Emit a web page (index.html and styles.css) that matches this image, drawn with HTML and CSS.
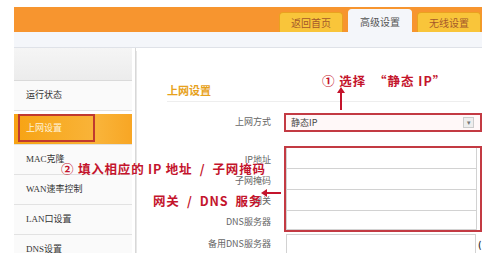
FILE: index.html
```html
<html>
<head>
<title>上网设置</title>
<link rel="stylesheet" href="styles.css">
</head>
<body>

<div class="page">
	<div class="topbar">
		<div class="tab">返回首页</div>
		<div class="tab active">高级设置</div>
		<div class="tab">无线设置</div>
	</div>
	<div class="band"></div>

	<div class="main">
		<div class="sidebar">
			<div class="side_top"></div>
			<div class="side_item">运行状态</div>
			<div class="side_item current"><span class="mark">上网设置</span></div>
			<div class="side_item">MAC克隆</div>
			<div class="side_item">WAN速率控制</div>
			<div class="side_item">LAN口设置</div>
			<div class="side_item">DNS设置</div>
		</div>

		<div class="content">
			<div class="heading">上网设置</div>

			<div class="row">
				<label class="lbl">上网方式</label>
				<div class="select">静态IP<span class="arrow">&#9662;</span></div>
			</div>

			<div class="group">
				<div class="lbls">
					<label class="lbl">IP地址</label>
					<label class="lbl">子网掩码</label>
					<label class="lbl">网关</label>
					<label class="lbl">DNS服务器</label>
				</div>
				<div class="boxes">
					<div class="input"></div>
					<div class="input"></div>
					<div class="input"></div>
					<div class="input last"></div>
				</div>
			</div>

			<div class="row last_row">
				<label class="lbl">备用DNS服务器</label>
				<div class="input single"></div>
				<span class="paren">(</span>
			</div>
		</div>
	</div>

	<!-- annotations drawn over the screenshot -->
	<div class="note note1">&#9312; 选择 &nbsp;“静态 IP”</div>
	<div class="arrow_up"></div>
	<div class="note note2">&#9313; 填入相应的 IP 地址 &nbsp;/ &nbsp;子网掩码</div>
	<div class="note note3">网关 &nbsp;/ &nbsp;DNS &nbsp;服务</div>
	<div class="arrow_left"></div>
</div>

</body>
</html>
```

FILE: styles.css
```css
body { margin: 0; background-color: white; font-family: "Noto Sans CJK SC", "Liberation Sans", sans-serif; }
.page { position: relative; width: 468px; padding: 7px 0 0 14px; }

.topbar {
	height: 25px; background-color: #f7952f;
	display: flex; justify-content: flex-end; align-items: flex-end;
	padding-right: 1px;
}
.tab {
	width: 64px; height: 20px; margin-left: 5px;
	background-color: #f9c53a; border: 1px solid #eaa21f; border-bottom: none;
	border-radius: 4px 4px 0 0; box-sizing: border-box;
	font-size: 10px; line-height: 20px; text-align: center; color: #a5582a;
}
.tab.active { height: 23px; background-color: #f4f6fa; border-color: #f4f6fa; color: #555; line-height: 24px; }
.band { height: 15px; background-color: #f4f6fa; border-bottom: 1px solid #dfe2e8; }

.main { display: flex; }
.sidebar { width: 118px; border-right: 1px solid #d8d8d8; padding-right: 3px; box-shadow: 4px 0 0 -3px #e8e8e8; }
.side_top { height: 32px; background: linear-gradient(#f5f5f5, #ececec); border-bottom: 1px solid #dadada; }
.side_item {
	height: 29px; border-bottom: 1px solid #e2e2e2; background-color: #fafafa;
	font-size: 9px; line-height: 29px; padding-left: 12px; color: #333;
	font-family: "Liberation Serif", "Noto Sans CJK SC", serif;
}
.side_item:first-of-type { height: 24px; }
.side_item.current {
	height: 30px; padding-left: 4px;
	background: linear-gradient(90deg, #f7a313, #f9b43a 70%, #f8a624);
	color: #fff3d8; line-height: normal;
}
.mark { display: block; width: 67px; height: 24px; margin-top: 3px; padding-left: 6px; border: 2px solid #c0392f; line-height: 24px; }

.content { flex: 1; margin-left: 4px; background-color: white; padding-top: 34px; }
.heading {
	margin-left: 27px; margin-right: 12px; padding-bottom: 3px;
	border-bottom: 1px solid #eeeeee;
	font-size: 11px; font-weight: bold; color: #e7a21d;
}

.row { display: flex; align-items: center; margin-top: 10px; }
.lbl { display: block; width: 131px; text-align: right; font-size: 9px; color: #666; }
.select {
	margin-left: 13px; width: 198px; height: 19px; box-sizing: border-box;
	border: 2px solid #c33a43; background-color: #fff8f8;
	font-size: 9px; line-height: 15px; padding-left: 5px; color: #444;
	display: flex; justify-content: space-between;
}
.arrow { width: 9px; height: 9px; margin: 2px 6px 0 0; border: 1px solid #ccc; background-color: #eee; font-size: 7px; line-height: 9px; text-align: center; color: #777; }

.group { display: flex; margin-top: 14px; }
.lbls { display: flex; flex-direction: column; padding-top: 4px; }
.lbls .lbl { height: 20.5px; line-height: 20px; }
.boxes { margin-left: 13px; width: 191px; border: 2px solid #c33a43; padding-right: 3px; }
.input { height: 20px; border: 1px solid #d2d2d2; border-top: none; background-color: white; }
.input.last { height: 18px; }
.row .lbl { line-height: 20px; }
.input.single { margin-left: 15px; width: 190px; height: 20px; border-top: 1px solid #d2d2d2; box-sizing: border-box; }
.last_row { margin-top: 2px; }
.paren { margin-left: 2px; font-size: 9px; font-weight: bold; color: #333; }

.note { position: absolute; font-size: 12.5px; font-weight: bold; color: #c4142c; white-space: nowrap; letter-spacing: 0.8px; }
.note1 { left: 322px; top: 71px; letter-spacing: 1px; }
.note2 { left: 61px; top: 159px; }
.note3 { left: 153px; top: 191px; }
.arrow_up { position: absolute; left: 340px; top: 92px; width: 2px; height: 18px; background-color: #c4142c; }
.arrow_up::before { content: ""; position: absolute; left: -3px; top: -5px; border: 4px solid transparent; border-top: none; border-bottom: 6px solid #c4142c; }
.arrow_left { position: absolute; left: 266px; top: 192px; width: 15px; height: 2px; background-color: #c4142c; }
.arrow_left::before { content: ""; position: absolute; left: -5px; top: -3px; border: 4px solid transparent; border-left: none; border-right: 6px solid #c4142c; }
```
